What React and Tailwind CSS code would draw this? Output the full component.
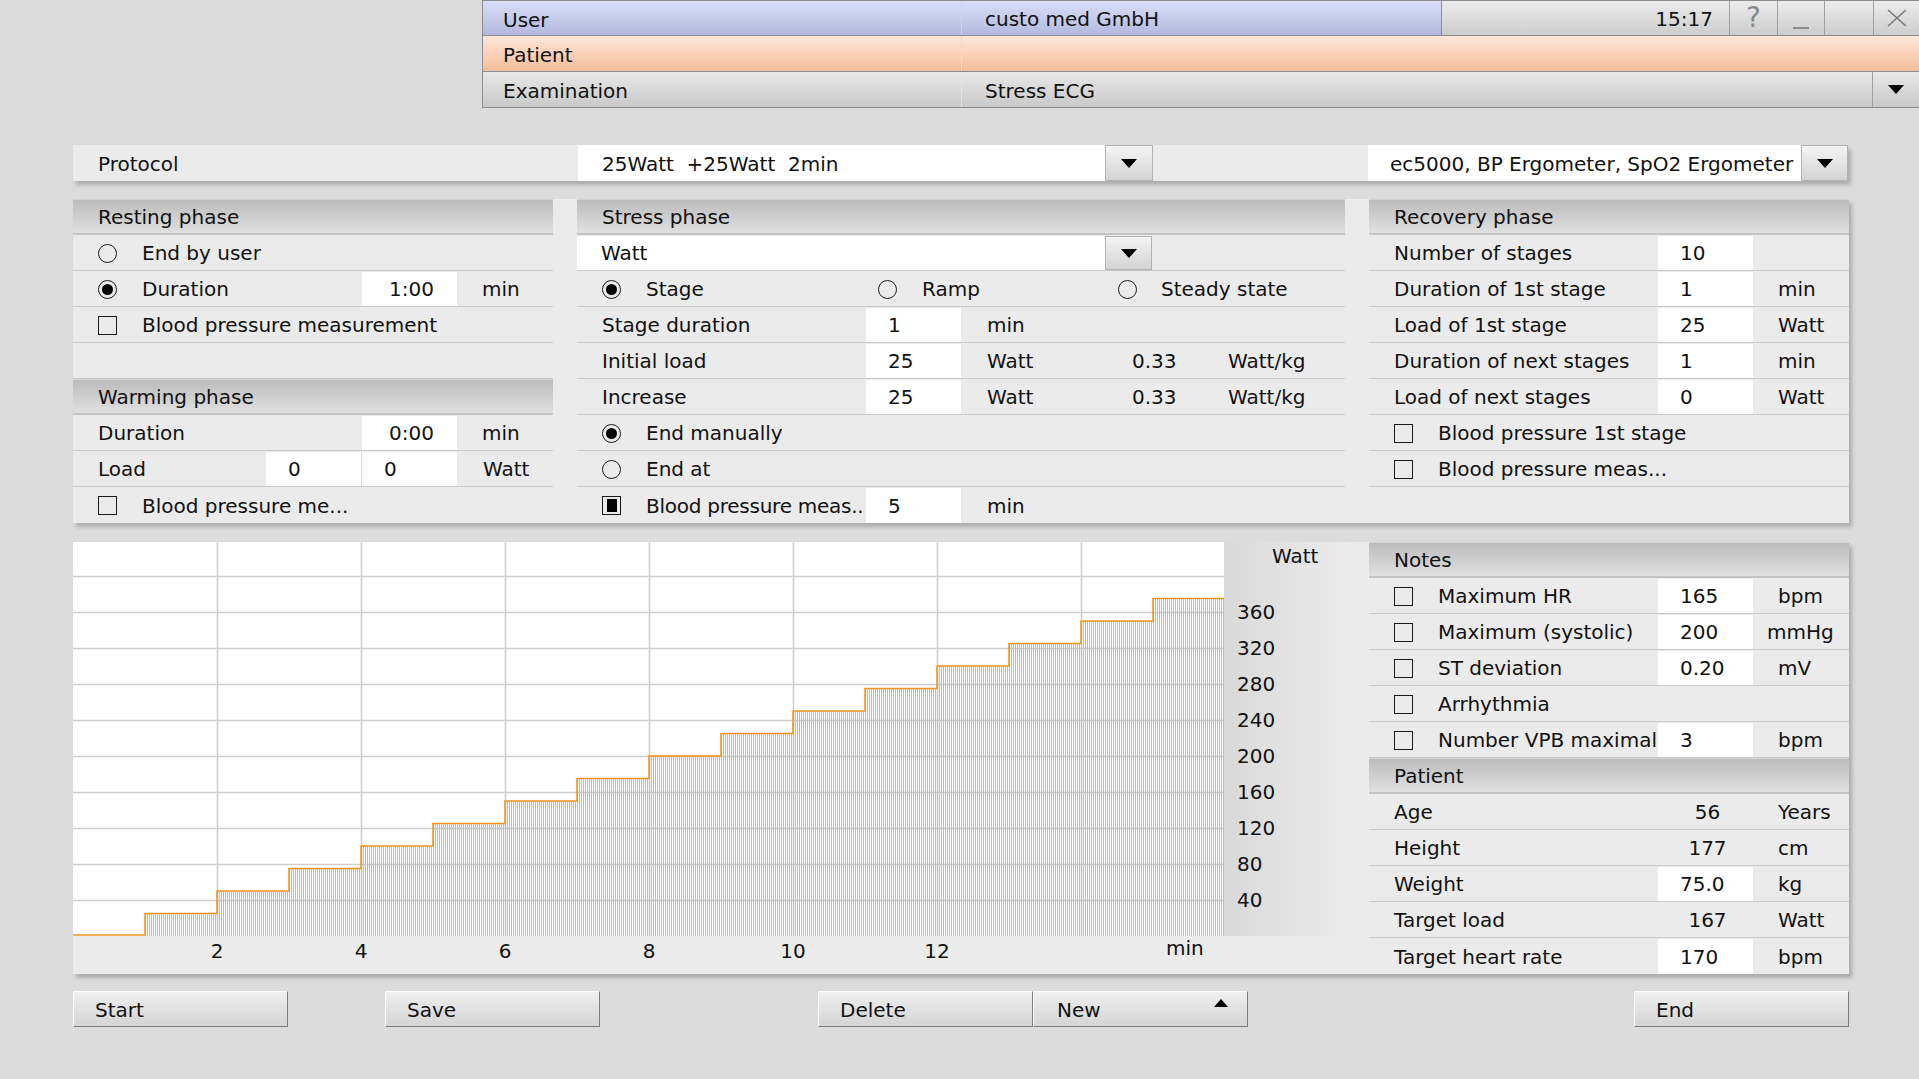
import React from "react";

const row = "h-[36px] shrink-0 flex items-center border-b border-[#c9c9c9] whitespace-nowrap pt-px";
const lastRow = "h-[36px] shrink-0 flex items-center whitespace-nowrap pt-px";

function Head({ children }) {
  return (
    <div className="h-[36px] shrink-0 flex items-center pl-[25px] bg-linear-to-b from-[#bcbcbc] to-[#e0e0e0] border-t border-t-[#d2d2d2] border-b-2 border-b-[#c4c4c4]">
      {children}
    </div>
  );
}

function Radio({ on }) {
  return (
    <span className="w-[19px] h-[19px] shrink-0 rounded-full border border-[#1a1a1a] flex items-center justify-center">
      {on && <span className="w-[11px] h-[11px] rounded-full bg-black" />}
    </span>
  );
}

function Check({ on }) {
  return (
    <span className="w-[19px] h-[19px] shrink-0 border border-[#1a1a1a] flex items-center justify-center">
      {on && <span className="w-[10px] h-[13px] bg-black" />}
    </span>
  );
}

function Tri({ up }) {
  return (
    <svg width="16" height="9" viewBox="0 0 16 9">
      <path d={up ? "M0 9 L8 0 L16 9 Z" : "M0 0 L16 0 L8 9 Z"} fill="#000" />
    </svg>
  );
}

function DropBtn({ w = "w-[48px]" }) {
  return (
    <div className={`${w} h-full shrink-0 flex items-center justify-center bg-linear-to-b from-[#f4f4f4] to-[#d4d4d4] border border-[#b2b2b2]`}>
      <Tri />
    </div>
  );
}

function Cell({ children, w = "w-[95px]", center }) {
  return (
    <div className={`${w} h-full shrink-0 bg-white flex items-center ${center ? "justify-center pl-[4px]" : "pl-[22px]"}`}>
      {children}
    </div>
  );
}

// label area + white value cell + unit
function Field({ label, check, radio, value, unit, last, center, white = true, unitCls = "pl-[25px]" }) {
  return (
    <div className={last ? lastRow : row}>
      <div className="w-[289px] h-full shrink-0 pl-[25px] flex items-center gap-[25px] overflow-hidden">
        {check !== undefined && <Check on={check} />}
        {radio !== undefined && <Radio on={radio} />}
        <span>{label}</span>
      </div>
      {value !== undefined &&
        (white ? (
          <Cell center={center}>{value}</Cell>
        ) : (
          <div className="w-[95px] h-full shrink-0 flex items-center justify-center pl-[4px]">{value}</div>
        ))}
      {unit && <span className={unitCls}>{unit}</span>}
    </div>
  );
}

function Option({ label, on, last }) {
  return (
    <div className={last ? lastRow : row}>
      <div className="pl-[25px] flex items-center gap-[25px]">
        {on === "c" || on === "cx" ? <Check on={on === "cx"} /> : <Radio on={on} />}
        <span>{label}</span>
      </div>
    </div>
  );
}

function Btn({ children, extra = "" }) {
  return (
    <div className={`w-[215px] h-[36px] shrink-0 flex items-center pt-[2px] pl-[21px] bg-linear-to-b from-[#f0f0f0] to-[#d4d4d4] border border-t-white border-l-white border-b-[#7c7c7c] border-r-[#7c7c7c] ${extra}`}>
      {children}
    </div>
  );
}

function Chart() {
  const W = 1151;
  const H = 394;
  let line = "M0 393";
  let area = `M0 ${H}`;
  for (let i = 0; i < 16; i++) {
    const y = i === 0 ? 393 : H - i * 22.5;
    line += ` L${i * 72} ${y} L${(i + 1) * 72} ${y}`;
    area += ` L${i * 72} ${i === 0 ? H : y} L${(i + 1) * 72} ${i === 0 ? H : y}`;
  }
  area += ` L${W} ${H} Z`;
  return (
    <svg width={W} height={H} viewBox={`0 0 ${W} ${H}`} className="block shrink-0 bg-white">
      <defs>
        <pattern id="hatch" width="2" height="8" patternUnits="userSpaceOnUse">
          <rect x="0" y="0" width="1" height="8" fill="#f8ad62" />
        </pattern>
      </defs>
      {Array.from({ length: 10 }, (_, k) => (
        <line key={"h" + k} x1="0" x2={W} y1={H - 36 * (k + 1) + 0.5} y2={H - 36 * (k + 1) + 0.5} stroke="#cdcdcd" strokeWidth="1.5" />
      ))}
      {Array.from({ length: 7 }, (_, k) => (
        <line key={"v" + k} x1={144 * (k + 1) + 0.5} x2={144 * (k + 1) + 0.5} y1="0" y2={H} stroke="#cdcdcd" strokeWidth="1.5" />
      ))}
      <path d={area} fill="url(#hatch)" />
      <path d={line} fill="none" stroke="#f7941d" strokeWidth="1.6" />
    </svg>
  );
}

export default function App() {
  return (
    <div className="w-[1919px] h-[1079px] overflow-hidden bg-[#dcdcdc] text-[20px] leading-[24px] text-[#111] font-['DejaVu_Sans',sans-serif]">
      {/* header */}
      <div className="ml-[482px] w-[1437px] border-l border-[#8c8c8c]">
        <div className="h-[36px] flex border-t border-b border-[#8c8c8c]">
          <div className="w-[479px] pl-[20px] pt-[3px] flex items-center bg-linear-to-b from-[#d9dff7] to-[#b2b9de] border-r border-[#d0d3e6]">User</div>
          <div className="w-[480px] pl-[23px] pt-[2px] flex items-center bg-linear-to-b from-[#d9dff7] to-[#b2b9de] border-r border-[#8c8c8c]">custo med GmbH</div>
          <div className="w-[288px] pr-[16px] pt-[2px] flex items-center justify-end bg-linear-to-b from-[#ececec] to-[#cdcdcd] border-r border-[#a0a0a0]">15:17</div>
          <div className="w-[48px] flex items-center justify-center bg-linear-to-b from-[#ececec] to-[#cdcdcd] border-r border-[#a0a0a0] text-[28px] text-[#8a8a8a]">?</div>
          <div className="w-[47px] flex items-end justify-center pb-[6px] bg-linear-to-b from-[#ececec] to-[#cdcdcd] border-r border-[#a0a0a0]">
            <span className="w-[16px] h-[2px] bg-[#8a8a8a]" />
          </div>
          <div className="w-[49px] bg-linear-to-b from-[#ececec] to-[#cdcdcd] border-r border-[#a0a0a0]" />
          <div className="flex-1 flex items-center justify-center bg-linear-to-b from-[#ececec] to-[#cdcdcd]">
            <svg width="20" height="18" viewBox="0 0 20 18">
              <path d="M1 1 L19 17 M19 1 L1 17" stroke="#7a7a7a" strokeWidth="1.6" />
            </svg>
          </div>
        </div>
        <div className="h-[36px] flex border-b border-[#8c8c8c] bg-linear-to-b from-[#fee6d9] to-[#f3be9b]">
          <div className="w-[479px] pl-[20px] pt-[3px] flex items-center border-r border-[#f6d8c6]">Patient</div>
          <div className="flex-1" />
        </div>
        <div className="h-[36px] flex border-b border-[#8c8c8c] bg-linear-to-b from-[#e8e8e8] to-[#c9c9c9]">
          <div className="w-[479px] pl-[20px] pt-[3px] flex items-center border-r border-[#e4e4e4]">Examination</div>
          <div className="flex-1 pl-[23px] pt-[3px] flex items-center border-r border-[#a0a0a0]">Stress ECG</div>
          <div className="w-[46px] flex items-center justify-center">
            <Tri />
          </div>
        </div>
      </div>

      {/* protocol */}
      <div className="mt-[37px] ml-[73px] w-[1775px] h-[36px] flex bg-[#ebebeb] shadow-[3px_4px_4px_rgba(0,0,0,0.22)] whitespace-nowrap">
        <div className="w-[505px] pl-[25px] pt-px flex items-center">Protocol</div>
        <div className="w-[527px] pl-[24px] pt-px flex items-center bg-white whitespace-pre">25Watt  +25Watt  2min</div>
        <DropBtn />
        <div className="w-[215px]" />
        <div className="w-[433px] pl-[22px] pt-px flex items-center bg-white overflow-hidden">ec5000, BP Ergometer, SpO2 Ergometer</div>
        <DropBtn w="w-[47px]" />
      </div>

      {/* phases */}
      <div className="mt-[18px] ml-[73px] w-[1776px] flex gap-[24px] bg-[#ebebeb] shadow-[3px_4px_4px_rgba(0,0,0,0.22)]">
        <div className="w-[480px] flex flex-col">
          <Head>Resting phase</Head>
          <Option label="End by user" on={false} />
          <Field label="Duration" radio={true} value="1:00" unit="min" center />
          <Option label="Blood pressure measurement" on="c" />
          <div className={row} />
          <Head>Warming phase</Head>
          <Field label="Duration" value="0:00" unit="min" center />
          <div className={row}>
            <div className="w-[193px] pl-[25px]">Load</div>
            <Cell>0</Cell>
            <div className="w-px h-full bg-[#d8d8d8]" />
            <Cell>0</Cell>
            <span className="pl-[26px]">Watt</span>
          </div>
          <Option label="Blood pressure me..." on="c" last />
        </div>

        <div className="w-[768px] flex flex-col">
          <Head>Stress phase</Head>
          <div className={row}>
            <div className="w-[528px] h-full pl-[24px] flex items-center bg-white">Watt</div>
            <DropBtn w="w-[47px]" />
          </div>
          <div className={row + " pl-[25px]"}>
            <div className="w-[276px] flex items-center gap-[25px]"><Radio on /> <span>Stage</span></div>
            <div className="w-[240px] flex items-center gap-[25px]"><Radio /> <span>Ramp</span></div>
            <div className="flex items-center gap-[24px]"><Radio /> <span>Steady state</span></div>
          </div>
          <Field label="Stage duration" value="1" unit="min" unitCls="pl-[26px]" />
          {[["Initial load", "25"], ["Increase", "25"]].map(([l, v]) => (
            <div key={l} className={row}>
              <div className="w-[289px] pl-[25px]">{l}</div>
              <Cell>{v}</Cell>
              <div className="w-[146px] pl-[26px]">Watt</div>
              <div className="w-[96px] pl-[25px]">0.33</div>
              <div className="pl-[25px]">Watt/kg</div>
            </div>
          ))}
          <Option label="End manually" on />
          <Option label="End at" on={false} />
          <div className={lastRow}>
            <div className="w-[289px] h-full pl-[25px] flex items-center gap-[25px]">
              <Check on /> <span className="tracking-[-0.25px]">Blood pressure meas..</span>
            </div>
            <Cell>5</Cell>
            <span className="pl-[26px]">min</span>
          </div>
        </div>

        <div className="w-[480px] flex flex-col">
          <Head>Recovery phase</Head>
          <Field label="Number of stages" value="10" />
          <Field label="Duration of 1st stage" value="1" unit="min" />
          <Field label="Load of 1st stage" value="25" unit="Watt" />
          <Field label="Duration of next stages" value="1" unit="min" />
          <Field label="Load of next stages" value="0" unit="Watt" />
          <Option label="Blood pressure 1st stage" on="c" />
          <Option label="Blood pressure meas..." on="c" />
          <div className={lastRow} />
        </div>
      </div>

      {/* chart + notes */}
      <div className="mt-[19px] ml-[73px] w-[1776px] h-[432px] flex gap-[24px] bg-[#ebebeb] shadow-[3px_4px_4px_rgba(0,0,0,0.22)]">
        <div className="w-[1272px] flex flex-col">
          <div className="flex">
            <Chart />
            <div className="w-[121px] h-[394px] flex flex-col bg-linear-to-r from-[#d9d9d9] to-[#ebebeb]">
              <div className="h-[28px] pl-[48px] flex items-center">Watt</div>
              <div className="mt-[24px] flex flex-col">
                {[360, 320, 280, 240, 200, 160, 120, 80, 40].map((v) => (
                  <div key={v} className="h-[36px] pl-[13px] flex items-center">{v}</div>
                ))}
              </div>
            </div>
          </div>
          <div className="h-[38px] flex items-start pt-[3px] pl-[124px]">
            {[2, 4, 6, 8, 10, 12].map((v, i) => (
              <div key={v} className={`w-[40px] text-center ${i ? "ml-[104px]" : ""}`}>{v}</div>
            ))}
            <div className="ml-[209px] -mt-[3px]">min</div>
          </div>
        </div>

        <div className="w-[480px] flex flex-col">
          <Head>Notes</Head>
          <Field check={false} label="Maximum HR" value="165" unit="bpm" />
          <Field check={false} label="Maximum (systolic)" value="200" unit="mmHg" unitCls="pl-[14px]" />
          <Field check={false} label="ST deviation" value="0.20" unit="mV" />
          <Field check={false} label="Arrhythmia" />
          <Field check={false} label="Number VPB maximal" value="3" unit="bpm" />
          <Head>Patient</Head>
          <Field label="Age" value="56" unit="Years" white={false} />
          <Field label="Height" value="177" unit="cm" white={false} />
          <Field label="Weight" value="75.0" unit="kg" />
          <Field label="Target load" value="167" unit="Watt" white={false} />
          <Field label="Target heart rate" value="170" unit="bpm" last />
        </div>
      </div>

      {/* buttons */}
      <div className="mt-[17px] pl-[73px] flex">
        <Btn>Start</Btn>
        <Btn extra="ml-[97px]">Save</Btn>
        <Btn extra="ml-[218px]">Delete</Btn>
        <Btn extra="pl-[23px]">
          <span>New</span>
          <span className="ml-auto mr-[19px] self-start mt-[5px] flex">
            <svg width="14" height="8" viewBox="0 0 14 8"><path d="M0 8 L7 0 L14 8 Z" fill="#000" /></svg>
          </span>
        </Btn>
        <Btn extra="ml-[386px] w-[214px]">End</Btn>
      </div>
    </div>
  );
}
